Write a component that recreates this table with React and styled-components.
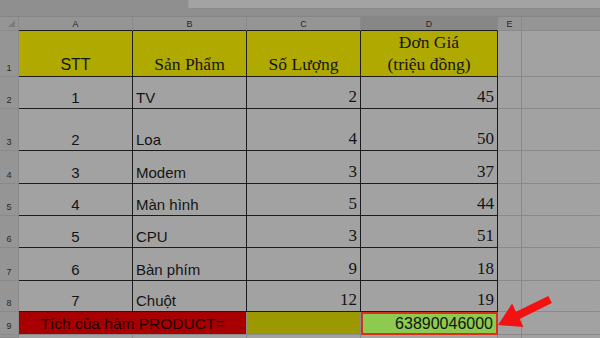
import React from "react";
import styled, { createGlobalStyle } from "styled-components";

const Global = createGlobalStyle`
  html, body { margin: 0; padding: 0; background: #a2a2a2; }
  body { width: 600px; height: 338px; overflow: hidden; }
  * { box-sizing: border-box; }
`;

const DARK = "#1c1c1c";
const LIGHT = "#8a8a8a";

const rows = [
  { n: 2, stt: "1", name: "TV", qty: "2", price: "45" },
  { n: 3, stt: "2", name: "Loa", qty: "4", price: "50" },
  { n: 4, stt: "3", name: "Modem", qty: "3", price: "37" },
  { n: 5, stt: "4", name: "Màn hình", qty: "5", price: "44" },
  { n: 6, stt: "5", name: "CPU", qty: "3", price: "51" },
  { n: 7, stt: "6", name: "Bàn phím", qty: "9", price: "18" },
  { n: 8, stt: "7", name: "Chuột", qty: "12", price: "19" },
];

export default function App() {
  return (
    <Screen>
      <Global />
      <TopBar>
        <NameArea />
        <FormulaArea />
      </TopBar>
      <Sheet>
        <Corner>
          <CornerMark />
        </Corner>
        <ColHead $table>A</ColHead>
        <ColHead $table>B</ColHead>
        <ColHead $table>C</ColHead>
        <ColHead $table $selected>D</ColHead>
        <ColHead>E</ColHead>
        <ColHead $last />

        <RowHead>1</RowHead>
        <Cell $bg="#b0aa00" $dark $align="center" $size="16px">STT</Cell>
        <Cell $bg="#b0aa00" $dark $align="center" $serif $size="17.5px">Sản Phẩm</Cell>
        <Cell $bg="#b0aa00" $dark $align="center" $serif $size="17.5px">Số Lượng</Cell>
        <Cell $bg="#b0aa00" $dark $align="center" $serif $size="17.5px">
          <Stack>
            <span>Đơn Giá</span>
            <span>(triệu đồng)</span>
          </Stack>
        </Cell>
        <Cell />
        <Cell $last />

        {rows.map((r) => (
          <React.Fragment key={r.n}>
            <RowHead>{r.n}</RowHead>
            <Cell $dark $align="center">{r.stt}</Cell>
            <Cell $dark $align="flex-start">{r.name}</Cell>
            <Cell $dark $align="flex-end" $serif>{r.qty}</Cell>
            <Cell $dark $align="flex-end" $serif>{r.price}</Cell>
            <Cell />
            <Cell $last />
          </React.Fragment>
        ))}

        <RowHead>9</RowHead>
        <MergedLabel>Tích của hàm PRODUCT=</MergedLabel>
        <Cell $bg="#9c9800" />
        <ResultCell>63890046000</ResultCell>
        <Cell />
        <Cell $last />

        <RowHead $tail />
        <Cell $tail />
        <Cell $tail />
        <Cell $tail />
        <Cell $tail />
        <Cell $tail />
        <Cell $tail $last />
      </Sheet>
      <Arrow viewBox="0 0 60 42" aria-hidden="true">
        <polygon
          points="2,32 16.1,10.6 20,18.7 52.3,2.9 55.9,10.1 23.6,25.9 27.5,34"
          fill="#f21212"
        />
      </Arrow>
    </Screen>
  );
}

const Screen = styled.div`
  position: relative;
  width: 600px;
  height: 338px;
  overflow: hidden;
  background: #a2a2a2;
`;

const TopBar = styled.div`
  display: flex;
  height: 17px;
  background: #8f8f8f;
  border-bottom: 1px solid #868686;
`;

const NameArea = styled.div`
  width: 188px;
`;

const FormulaArea = styled.div`
  flex: 1;
  height: 9px;
  background: #a3a3a3;
  border-left: 1px solid #9a9a9a;
  border-bottom: 1px solid #8a8a8a;
`;

const Sheet = styled.div`
  display: grid;
  grid-template-columns: 19px 114px 114px 114px 137px 24px 1fr;
  grid-template-rows: 14px 46px 32px 42px 33px 32px 32px 33px 31px 23px 1fr;
  height: 321px;
  font-family: "Liberation Sans", Arial, sans-serif;
  color: #141414;
`;

const Corner = styled.div`
  position: relative;
  background: #959595;
  border-right: 1px solid ${LIGHT};
  border-bottom: 1px solid ${LIGHT};
`;

const CornerMark = styled.div`
  position: absolute;
  right: 3px;
  bottom: 3px;
  width: 0;
  height: 0;
  border-left: 7px solid transparent;
  border-bottom: 7px solid #7c7c7c;
`;

const ColHead = styled.div`
  display: flex;
  align-items: center;
  justify-content: center;
  font-size: 9px;
  color: #262626;
  background: ${(p) => (p.$selected ? "#878787" : "#959595")};
  border-right: 1px solid ${(p) => (p.$last ? "transparent" : LIGHT)};
  border-bottom: 1px solid ${(p) => (p.$table ? DARK : LIGHT)};
`;

const RowHead = styled.div`
  display: flex;
  align-items: flex-end;
  justify-content: center;
  padding-bottom: ${(p) => (p.$tail ? 0 : "3px")};
  font-size: 9px;
  color: #262626;
  background: #959595;
  border-right: 1px solid ${LIGHT};
  border-bottom: 1px solid ${LIGHT};
`;

const Cell = styled.div`
  display: flex;
  align-items: flex-end;
  justify-content: ${(p) => p.$align || "flex-start"};
  padding: 0 3px 3px 3px;
  background: ${(p) => p.$bg || "#a2a2a2"};
  font-family: ${(p) =>
    p.$serif ? '"Liberation Serif", "Times New Roman", serif' : '"Liberation Sans", Arial, sans-serif'};
  font-size: ${(p) => p.$size || (p.$serif ? "17px" : "15px")};
  line-height: 1;
  white-space: nowrap;
  border-right: 1px solid ${(p) => (p.$dark ? DARK : p.$last ? "transparent" : LIGHT)};
  border-bottom: 1px solid ${(p) => (p.$dark ? DARK : LIGHT)};
  ${(p) => p.$tail && "border-bottom: none;"}
`;

const Stack = styled.div`
  display: flex;
  flex-direction: column;
  align-items: center;
  gap: 4px;
`;

const MergedLabel = styled.div`
  grid-column: span 2;
  display: flex;
  align-items: center;
  justify-content: center;
  padding-top: 1px;
  background: #a80000;
  color: #220000;
  font-size: 15.5px;
  border-right: 1px solid ${LIGHT};
  border-bottom: 1px solid ${LIGHT};
`;

const ResultCell = styled.div`
  display: flex;
  align-items: center;
  justify-content: flex-end;
  padding: 1px 3px 0 0;
  background: #8ccb4f;
  color: #141414;
  font-size: 16px;
  border: 2px solid #d8301a;
`;

const Arrow = styled.svg`
  position: absolute;
  left: 496px;
  top: 293px;
  width: 60px;
  height: 42px;
`;
